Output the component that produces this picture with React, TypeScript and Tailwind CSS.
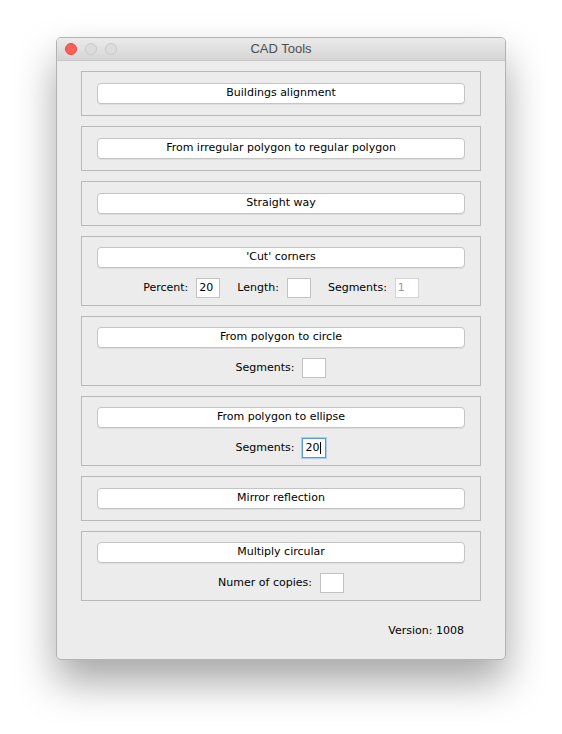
import React from "react";

const font = { fontFamily: '"DejaVu Sans", Verdana, sans-serif' };

function ToolButton({ label }: { label: string }) {
  return (
    <div className="flex h-[21px] items-center justify-center rounded-[4px] border border-[#c4c4c4] bg-white text-[11px] text-black shadow-[0_1px_0_rgba(0,0,0,0.06)]">
      {label}
    </div>
  );
}

function Field({
  value,
  focused,
  disabled,
}: {
  value?: string;
  focused?: boolean;
  disabled?: boolean;
}) {
  return (
    <div
      className={
        focused
          ? "flex h-[20px] w-[24px] items-center border border-[#5b9bd5] bg-white pl-[2px] text-[11px] text-black shadow-[0_0_0_1px_#a9cdf0]"
          : disabled
          ? "flex h-[20px] w-[24px] items-center border border-[#d4d4d4] bg-white pl-[2px] text-[11px] text-[#9a9a9a]"
          : "flex h-[20px] w-[24px] items-center border border-[#c2c2c2] bg-white pl-[2px] text-[11px] text-black"
      }
    >
      {value}
      {focused && <span className="ml-[1px] h-[12px] w-px bg-black" />}
    </div>
  );
}

function Panel({
  label,
  children,
}: {
  label: string;
  children?: React.ReactNode;
}) {
  return (
    <div
      className={
        children
          ? "flex flex-col gap-[10px] border border-[#b9b9b9] px-[15px] pb-[7px] pt-[10px]"
          : "flex flex-col border border-[#b9b9b9] px-[15px] py-[11px]"
      }
    >
      <ToolButton label={label} />
      {children && (
        <div className="flex h-[20px] items-center justify-center gap-[8px] text-[11px] text-black">
          {children}
        </div>
      )}
    </div>
  );
}

export default function App() {
  return (
    <div className="min-h-[734px] w-[562px] bg-white pl-[56px] pt-[37px]" style={font}>
      <div className="flex h-[623px] w-[450px] flex-col overflow-hidden rounded-[5px] border border-[#b3b3b3] bg-[#ececec] shadow-[0_22px_40px_rgba(0,0,0,0.35)]">
        <div className="relative flex h-[23px] shrink-0 items-center justify-center border-b border-[#c8c8c8] bg-gradient-to-b from-[#ebebeb] to-[#d5d5d5] text-[13px] text-[#4d4d4d]">
          <div className="absolute left-[8px] top-[5px] flex gap-[8px]">
            <span className="h-[12px] w-[12px] rounded-full border border-[#e2463f] bg-[#fe5f57]" />
            <span className="h-[12px] w-[12px] rounded-full border border-[#c9c9c9] bg-[#dcdcdc]" />
            <span className="h-[12px] w-[12px] rounded-full border border-[#c9c9c9] bg-[#dcdcdc]" />
          </div>
          <span style={{ fontFamily: '"Liberation Sans", Arial, sans-serif' }}>CAD Tools</span>
        </div>

        <div className="flex flex-col gap-[10px] px-[24px] pt-[10px]">
          <Panel label="Buildings alignment" />
          <Panel label="From irregular polygon to regular polygon" />
          <Panel label="Straight way" />
          <Panel label="'Cut' corners">
            <span>Percent:</span>
            <Field value="20" />
            <span className="ml-[9px]">Length:</span>
            <Field />
            <span className="ml-[9px]">Segments:</span>
            <Field value="1" disabled />
          </Panel>
          <Panel label="From polygon to circle">
            <span>Segments:</span>
            <Field />
          </Panel>
          <Panel label="From polygon to ellipse">
            <span>Segments:</span>
            <Field value="20" focused />
          </Panel>
          <Panel label="Mirror reflection" />
          <Panel label="Multiply circular">
            <span>Numer of copies:</span>
            <Field />
          </Panel>
        </div>

        <div className="flex justify-end pr-[41px] pt-[22px] text-[11px] text-black">
          Version: 1008
        </div>
      </div>
    </div>
  );
}
